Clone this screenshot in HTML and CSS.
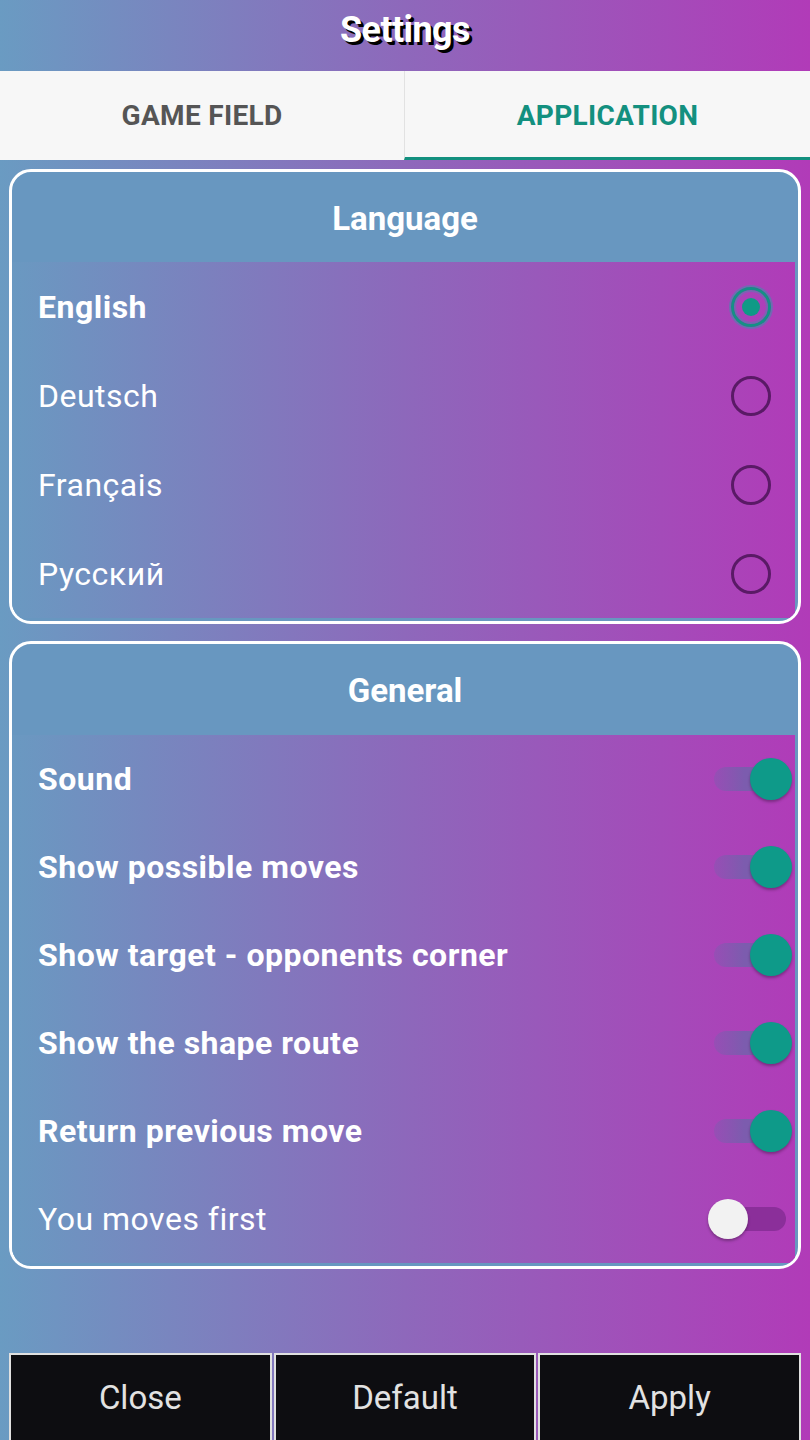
FILE: index.html
```html
<!DOCTYPE html>
<html lang="en">
<head>
<meta charset="utf-8">
<title>Settings</title>
<link rel="stylesheet" href="styles.css">
</head>
<body>
<div class="screen">
  <header class="topbar"><h1 class="title">Settings</h1></header>
  <nav class="tabs">
    <div class="tab">GAME FIELD</div>
    <div class="tab tab-active">APPLICATION</div>
  </nav>

  <section class="card card-lang">
    <div class="card-head">Language</div>
    <div class="card-body">
      <div class="row"><span class="label bold">English</span><span class="radio radio-on"></span></div>
      <div class="row"><span class="label">Deutsch</span><span class="radio"></span></div>
      <div class="row"><span class="label">Français</span><span class="radio"></span></div>
      <div class="row"><span class="label">Русский</span><span class="radio"></span></div>
    </div>
  </section>

  <section class="card card-general">
    <div class="card-head">General</div>
    <div class="card-body">
      <div class="row row-g"><span class="label bold">Sound</span><span class="switch on"><span class="track"></span><span class="thumb"></span></span></div>
      <div class="row row-g"><span class="label bold">Show possible moves</span><span class="switch on"><span class="track"></span><span class="thumb"></span></span></div>
      <div class="row row-g"><span class="label bold">Show target - opponents corner</span><span class="switch on"><span class="track"></span><span class="thumb"></span></span></div>
      <div class="row row-g"><span class="label bold">Show the shape route</span><span class="switch on"><span class="track"></span><span class="thumb"></span></span></div>
      <div class="row row-g"><span class="label bold">Return previous move</span><span class="switch on"><span class="track"></span><span class="thumb"></span></span></div>
      <div class="row row-g"><span class="label">You moves first</span><span class="switch off"><span class="track"></span><span class="thumb"></span></span></div>
    </div>
  </section>

  <footer class="buttons">
    <div class="btn">Close</div>
    <div class="btn">Default</div>
    <div class="btn">Apply</div>
  </footer>
</div>
</body>
</html>
```

FILE: styles.css
```css
* { box-sizing: border-box; }
html, body { margin: 0; padding: 0; }
body {
  width: 810px;
  height: 1440px;
  overflow: hidden;
  font-family: Roboto, "Noto Sans", "DejaVu Sans", sans-serif;
  background: linear-gradient(90deg, #6a9bc2 0%, #8e68bb 50%, #b13bb8 100%);
}
.screen { display: flex; flex-direction: column; }

.topbar {
  height: 71px;
  display: flex;
  align-items: center;
  justify-content: center;
  padding-bottom: 14px;
}
.title {
  margin: 0;
  color: #fff;
  font-size: 36px;
  font-weight: 700;
  letter-spacing: -0.6px;
  line-height: 1;
  text-shadow: 3px 3px 0 #000;
  transform: scaleY(1.05);
}

.tabs {
  height: 89px;
  display: grid;
  grid-template-columns: 404px 1fr;
  background: #f7f7f7;
}
.tab {
  display: flex;
  align-items: center;
  justify-content: center;
  font-size: 28px;
  font-weight: 700;
  color: #555555;
  letter-spacing: 0.3px;
}
.tab-active {
  color: #13907f;
  border-left: 1px solid #e2e2e2;
  border-bottom: 3px solid #13907f;
  padding-top: 3px;
}

.card {
  margin: 9px 9px 0;
  border: 3px solid #ffffff;
  border-radius: 22px;
  background: #6897c0;
  overflow: hidden;
}
.card-general { margin-top: 17px; }
.card-head {
  height: 90px;
  display: flex;
  align-items: center;
  justify-content: center;
  color: #fff;
  font-size: 33px;
  font-weight: 700;
  padding-top: 3px;
}
.card-general .card-head { height: 91px; padding-top: 2px; }
.card-body {
  margin: 0 3px 3px 0;
  background: linear-gradient(90deg, #6a99c1 0%, #8d68bb 50%, #b03cb8 100%);
}
.row {
  height: 89px;
  display: flex;
  align-items: center;
  justify-content: space-between;
  padding: 0 24px 0 26px;
}
.row-g { height: 88px; padding-right: 3px; }
.label {
  color: #fff;
  font-size: 32px;
  font-weight: 400;
  letter-spacing: 0.5px;
}
.label.bold { font-weight: 700; }

.radio {
  width: 40px;
  height: 40px;
  border-radius: 50%;
  border: 3px solid #5a1a66;
  display: flex;
  align-items: center;
  justify-content: center;
  flex: none;
}
.radio-on {
  border-color: #168f86;
  box-shadow: 0 0 0 2px rgba(40, 160, 170, 0.45), inset 0 0 0 2px rgba(40, 160, 170, 0.35);
}
.radio-on::after {
  content: "";
  width: 18px;
  height: 18px;
  border-radius: 50%;
  background: #0f9a86;
}

.switch {
  position: relative;
  width: 84px;
  height: 42px;
  flex: none;
}
.switch .track {
  position: absolute;
  left: 6px;
  right: 2px;
  top: 9px;
  height: 24px;
  border-radius: 12px;
}
.switch .thumb {
  position: absolute;
  top: 0;
  width: 42px;
  height: 42px;
  border-radius: 50%;
  box-shadow: 0 2px 3px rgba(0, 0, 0, 0.3);
}
.switch.on .track { background: linear-gradient(90deg, rgba(125, 92, 176, 0.4), #7c5cae 40%); }
.switch.on .thumb { right: 0; background: #0e9a89; }
.switch.off .track { background: #8b2f9a; left: 6px; right: 6px; }
.switch.off .thumb { left: 0; background: #f2f2f2; width: 40px; height: 40px; top: 1px; }

.buttons {
  margin-top: 84px;
  padding: 0 9px;
  display: grid;
  grid-template-columns: 1fr 1fr 1fr;
  gap: 2px;
}
.btn {
  height: 92px;
  background: #0d0d11;
  border: 2px solid #e0e0e0;
  color: #e2e2e2;
  font-size: 33px;
  display: flex;
  align-items: center;
  justify-content: center;
  padding-bottom: 4px;
}
```
